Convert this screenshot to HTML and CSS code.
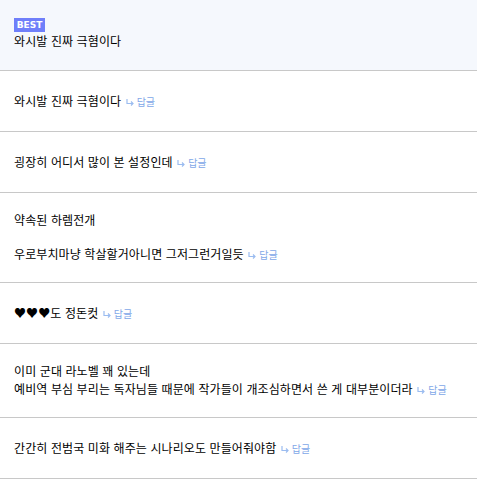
FILE: index.html
```html
<!DOCTYPE html>
<html lang="ko">

<head>
  <meta charset="UTF-8" />
  <meta name="viewport" content="width=device-width, initial-scale=1.0" />
  <title>댓글</title>
  <link rel="stylesheet" href="styles.css">
</head>

<body>
  <ul class="comment-list">
    <li class="comment best">
      <span class="badge">BEST</span>
      <p>와시발 진짜 극혐이다</p>
    </li>
    <li class="comment">
      <p>와시발 진짜 극혐이다 <a class="reply" href="#"><svg viewBox="0 0 8 7" width="8" height="7"><path d="M1 0V4.5H7M5 2.5L7 4.5L5 6.5" fill="none" stroke="currentColor" stroke-width="1.2"/></svg>답글</a></p>
    </li>
    <li class="comment">
      <p>굉장히 어디서 많이 본 설정인데 <a class="reply" href="#"><svg viewBox="0 0 8 7" width="8" height="7"><path d="M1 0V4.5H7M5 2.5L7 4.5L5 6.5" fill="none" stroke="currentColor" stroke-width="1.2"/></svg>답글</a></p>
    </li>
    <li class="comment">
      <p class="para">약속된 하렘전개</p>
      <p>우로부치마냥 학살할거아니면 그저그런거일듯 <a class="reply" href="#"><svg viewBox="0 0 8 7" width="8" height="7"><path d="M1 0V4.5H7M5 2.5L7 4.5L5 6.5" fill="none" stroke="currentColor" stroke-width="1.2"/></svg>답글</a></p>
    </li>
    <li class="comment">
      <p>♥♥♥도 정돈컷 <a class="reply" href="#"><svg viewBox="0 0 8 7" width="8" height="7"><path d="M1 0V4.5H7M5 2.5L7 4.5L5 6.5" fill="none" stroke="currentColor" stroke-width="1.2"/></svg>답글</a></p>
    </li>
    <li class="comment">
      <p>이미 군대 라노벨 꽤 있는데<br>예비역 부심 부리는 독자님들 때문에 작가들이 개조심하면서 쓴 게 대부분이더라 <a class="reply" href="#"><svg viewBox="0 0 8 7" width="8" height="7"><path d="M1 0V4.5H7M5 2.5L7 4.5L5 6.5" fill="none" stroke="currentColor" stroke-width="1.2"/></svg>답글</a></p>
    </li>
    <li class="comment">
      <p>간간히 전범국 미화 해주는 시나리오도 만들어줘야함 <a class="reply" href="#"><svg viewBox="0 0 8 7" width="8" height="7"><path d="M1 0V4.5H7M5 2.5L7 4.5L5 6.5" fill="none" stroke="currentColor" stroke-width="1.2"/></svg>답글</a></p>
    </li>
  </ul>
</body>

</html>
```

FILE: styles.css
```css
body {
  margin: 0;
  font-family: "Noto Sans CJK KR", "Noto Sans", sans-serif;
  font-size: 12px;
  color: #000;
  background-color: #fff;
}

.comment-list {
  list-style: none;
  margin: 0;
  padding: 0;
}

.comment {
  box-sizing: border-box;
  min-height: 61px;
  padding: 18px 14px;
  display: flex;
  flex-direction: column;
  justify-content: center;
  border-bottom: 1px solid #c8c8c8;
}

.comment p {
  margin: 0;
  line-height: 18px;
  letter-spacing: 0.1px;
}

.comment .para {
  margin-bottom: 16px;
}

.comment.best {
  min-height: 71px;
  justify-content: flex-start;
  align-items: flex-start;
  background-color: #f5f8fd;
}

.badge {
  display: inline-block;
  width: 31px;
  height: 14px;
  line-height: 14px;
  text-align: center;
  background-color: #6f7ffa;
  color: #fff;
  font-family: "DejaVu Sans", sans-serif;
  font-size: 9px;
  font-weight: bold;
}

.reply {
  margin-left: 1px;
  color: #82a8e8;
  font-size: 10px;
  text-decoration: none;
  letter-spacing: 0;
}

.reply svg {
  color: #9bbcf0;
  margin-right: 3px;
  vertical-align: 0;
}
```
